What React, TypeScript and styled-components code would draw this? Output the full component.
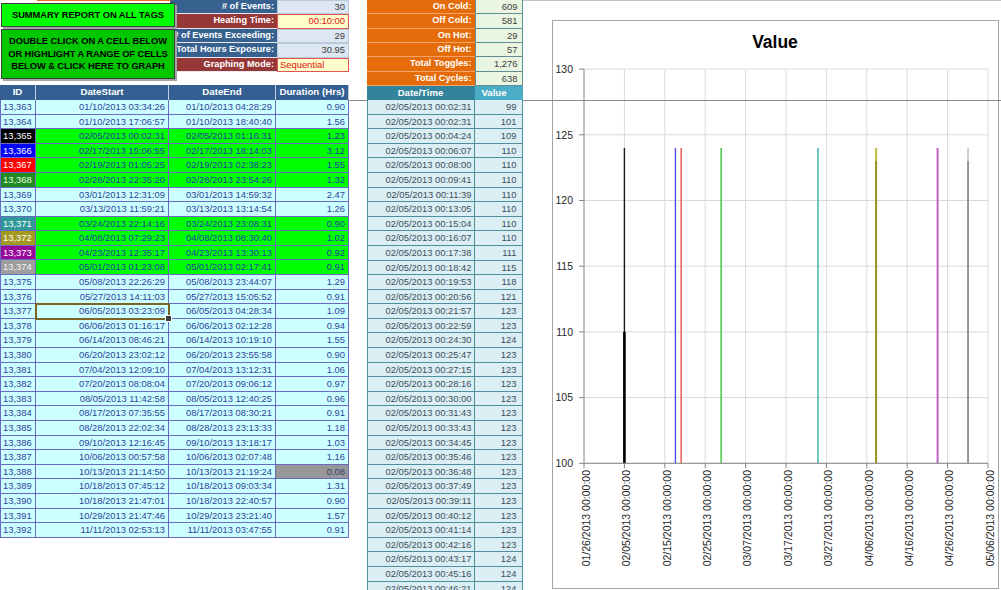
import React from 'react';
import styled, { createGlobalStyle } from 'styled-components';

const Global = createGlobalStyle`
  html, body { margin: 0; padding: 0; background: #ffffff; }
  body { font-family: "Liberation Sans", Arial, sans-serif; }
`;

const FONT = `"Liberation Sans", Arial, sans-serif`;

const Sheet = styled.div`
  position: relative;
  width: 1001px;
  height: 590px;
  overflow: hidden;
  background: #ffffff;
  display: flex;
  align-items: flex-start;
  font-family: ${FONT};
`;

const FreezeLine = styled.div`
  position: absolute;
  left: 0;
  right: 0;
  top: 99.5px;
  height: 1.5px;
  background: #8a8a8a;
  z-index: 1;
`;

/* ---------- left pane ---------- */

const LeftPane = styled.div`
  position: relative;
  z-index: 2;
  width: 349px;
  display: flex;
  flex-direction: column;
`;

const StatsGrid = styled.div`
  margin-left: 170px;
  display: grid;
  grid-template-columns: 107px 72px;
  grid-auto-rows: 14.4px;
`;

const StatLabel = styled.div<{ $tone: 'blue' | 'red' }>`
  box-sizing: border-box;
  background: ${(p) => (p.$tone === 'blue' ? '#37628f' : '#973838')};
  color: #ffffff;
  font: bold 9.2px/13.4px ${FONT};
  text-align: right;
  padding-right: 3px;
  white-space: nowrap;
  border-bottom: 1px solid #e8e8ee;
  display: flex;
  justify-content: flex-end;
`;

const StatValue = styled.div<{ $input?: boolean; $right?: boolean }>`
  box-sizing: border-box;
  background: ${(p) => (p.$input ? '#ffffcc' : '#dde7f1')};
  color: ${(p) => (p.$input ? '#e01010' : '#3a3a3a')};
  border: 1px solid ${(p) => (p.$input ? '#e05555' : '#b9c9dc')};
  font: 9.4px/12.4px ${FONT};
  text-align: ${(p) => (p.$input && !p.$right ? 'left' : 'right')};
  padding: 0 3px 0 2px;
  white-space: nowrap;
`;

const Spacer = styled.div<{ $h: number }>`
  height: ${(p) => p.$h}px;
`;

const EventTable = styled.div`
  display: grid;
  grid-template-columns: 36px 133px 107px 73px;
  grid-template-rows: 14.5px;
  grid-auto-rows: 14.6px;
`;

const EventHead = styled.div`
  box-sizing: border-box;
  background: #345f92;
  color: #ffffff;
  font: bold 9.7px/14.5px ${FONT};
  text-align: center;
  white-space: nowrap;
  border-right: 1px solid #c3cde0;
  &:last-of-type {
    border-right: 1px solid #345f92;
  }
`;

type Tone = 'plain' | 'hit' | 'gray';

const EventCell = styled.div<{
  $tone: Tone;
  $align: 'left' | 'right';
  $bg?: string;
  $fg?: string;
  $first?: boolean;
  $selected?: boolean;
}>`
  position: relative;
  box-sizing: border-box;
  border-right: 1px solid #6a6ac4;
  border-bottom: 1px solid #6a6ac4;
  border-left: ${(p) => (p.$first ? '1px solid #6a6ac4' : 'none')};
  background: ${(p) =>
    p.$bg ?? (p.$tone === 'hit' ? '#00ff00' : p.$tone === 'gray' ? '#979797' : '#ccffff')};
  color: ${(p) => p.$fg ?? (p.$tone === 'hit' ? '#1c3aa6' : p.$tone === 'gray' ? '#3a3f78' : '#30429a')};
  font: 9.4px/13.6px ${FONT};
  text-align: ${(p) => p.$align};
  padding: 0 ${(p) => (p.$align === 'right' ? '3px' : '2px')} 0 2px;
  white-space: nowrap;
  ${(p) =>
    p.$selected
      ? `
    z-index: 1;
    outline: 2px solid #7b6426;
    outline-offset: -1px;
    &::after {
      content: '';
      position: absolute;
      right: -4px;
      bottom: -4px;
      width: 5px;
      height: 5px;
      background: #3c3c3c;
      border: 1px solid #ffffff;
    }
  `
      : ''}
`;

/* ---------- buttons overlay ---------- */

const ButtonStack = styled.div`
  position: absolute;
  left: 1px;
  top: 0;
  z-index: 3;
  display: flex;
  flex-direction: column;
  gap: 2px;
`;

const TopStrip = styled.div`
  margin-left: 36px;
  width: 134px;
  height: 1px;
  background: #e07020;
`;

const ActionButton = styled.div<{ $tone: 'bright' | 'dark'; $h: number }>`
  box-sizing: border-box;
  width: 174px;
  height: ${(p) => p.$h}px;
  background: ${(p) => (p.$tone === 'bright' ? '#00ff00' : '#00c600')};
  border: 1px solid #404040;
  box-shadow: 2px 2px 0 #a3a3a3;
  color: #000000;
  font: bold 9.3px/12.6px ${FONT};
  letter-spacing: -0.05px;
  display: flex;
  align-items: center;
  justify-content: center;
  text-align: center;
  white-space: nowrap;
`;

/* ---------- middle pane ---------- */

const MiddlePane = styled.div`
  position: relative;
  z-index: 2;
  margin-left: 17.5px;
  width: 156px;
  display: flex;
  flex-direction: column;
`;

const ToggleGrid = styled.div`
  display: grid;
  grid-template-columns: 108px 48px;
  grid-auto-rows: 14.33px;
`;

const ToggleLabel = styled.div`
  box-sizing: border-box;
  background: #e46c0a;
  color: #ffffff;
  font: bold 9.2px/13.3px ${FONT};
  text-align: right;
  padding-right: 3px;
  white-space: nowrap;
  border-bottom: 1px solid #f3a46a;
`;

const ToggleValue = styled.div`
  box-sizing: border-box;
  background: #ebf6e2;
  color: #3c3c3c;
  border: 1px solid #5e8f94;
  border-top: none;
  font: 9.4px/13px ${FONT};
  text-align: right;
  padding-right: 4px;
`;

const ReadingTable = styled.div`
  display: grid;
  grid-template-columns: 108px 48px;
  grid-template-rows: 14px;
  grid-auto-rows: 14.6px;
`;

const ReadingHead = styled.div<{ $light?: boolean }>`
  background: ${(p) => (p.$light ? '#4bacc6' : '#31849b')};
  color: #ffffff;
  font: bold 9.6px/14px ${FONT};
  text-align: ${(p) => (p.$light ? 'left' : 'center')};
  padding-left: ${(p) => (p.$light ? '7px' : '0')};
  white-space: nowrap;
`;

const ReadingCell = styled.div<{ $first?: boolean }>`
  box-sizing: border-box;
  background: #daeef3;
  color: #3e4e5e;
  border-right: 1px solid #4e8e9e;
  border-bottom: 1px solid #4e8e9e;
  border-left: ${(p) => (p.$first ? '1px solid #4e8e9e' : 'none')};
  font: 9.4px/13.6px ${FONT};
  text-align: right;
  padding-right: ${(p) => (p.$first ? '2px' : '5px')};
  white-space: nowrap;
`;

/* ---------- chart ---------- */

const ChartPane = styled.div`
  flex: 1;
  align-self: stretch;
  border-top: 1px solid #c4c4c4;
  padding: 19px 0 0 29px;
`;

const ChartBox = styled.div`
  box-sizing: border-box;
  width: 447px;
  height: 569px;
  border: 1px solid #a6a6a6;
  background: #ffffff;
  display: flex;
  flex-direction: column;
`;

const ChartTitle = styled.div`
  height: 40px;
  font: bold 17.5px/42px ${FONT};
  color: #000000;
  text-align: center;
`;

/* ---------- data ---------- */

const stats: { label: string; tone: 'blue' | 'red'; value: string; input?: boolean; right?: boolean }[] = [
  { label: '# of Events:', tone: 'blue', value: '30' },
  { label: 'Heating Time:', tone: 'red', value: '00:10:00', input: true, right: true },
  { label: '# of Events Exceeding:', tone: 'blue', value: '29' },
  { label: 'Total Hours Exposure:', tone: 'blue', value: '30.95' },
  { label: 'Graphing Mode:', tone: 'red', value: 'Sequential', input: true },
];

const toggles: [string, string][] = [
  ['On Cold:', '609'],
  ['Off Cold:', '581'],
  ['On Hot:', '29'],
  ['Off Hot:', '57'],
  ['Total Toggles:', '1,276'],
  ['Total Cycles:', '638'],
];

type Ev = {
  id: string;
  s: string;
  e: string;
  d: string;
  idBg?: string;
  idFg?: string;
  hit?: boolean;
  gray?: boolean;
  sel?: boolean;
};

const events: Ev[] = [
  { id: '13,363', s: '01/10/2013 03:34:26', e: '01/10/2013 04:28:29', d: '0.90' },
  { id: '13,364', s: '01/10/2013 17:06:57', e: '01/10/2013 18:40:40', d: '1.56' },
  { id: '13,365', s: '02/05/2013 00:02:31', e: '02/05/2013 01:16:31', d: '1.23', idBg: '#000000', idFg: '#ffffff', hit: true },
  { id: '13,366', s: '02/17/2013 15:06:55', e: '02/17/2013 18:14:03', d: '3.12', idBg: '#0000ff', idFg: '#ffffff', hit: true },
  { id: '13,367', s: '02/19/2013 01:05:25', e: '02/19/2013 02:38:23', d: '1.55', idBg: '#ff0000', idFg: '#ffffff', hit: true },
  { id: '13,368', s: '02/28/2013 22:35:20', e: '02/28/2013 23:54:26', d: '1.32', idBg: '#1f8a1f', idFg: '#e8ffe0', hit: true },
  { id: '13,369', s: '03/01/2013 12:31:09', e: '03/01/2013 14:59:32', d: '2.47' },
  { id: '13,370', s: '03/13/2013 11:59:21', e: '03/13/2013 13:14:54', d: '1.26' },
  { id: '13,371', s: '03/24/2013 22:14:16', e: '03/24/2013 23:08:31', d: '0.90', idBg: '#2f9898', idFg: '#ffffff', hit: true },
  { id: '13,372', s: '04/08/2013 07:29:23', e: '04/08/2013 08:30:40', d: '1.02', idBg: '#a39820', idFg: '#ffffff', hit: true },
  { id: '13,373', s: '04/23/2013 12:35:17', e: '04/23/2013 13:30:13', d: '0.92', idBg: '#980898', idFg: '#ffffff', hit: true },
  { id: '13,374', s: '05/01/2013 01:23:08', e: '05/01/2013 02:17:41', d: '0.91', idBg: '#9e9e9e', idFg: '#f4f4f4', hit: true },
  { id: '13,375', s: '05/08/2013 22:26:29', e: '05/08/2013 23:44:07', d: '1.29' },
  { id: '13,376', s: '05/27/2013 14:11:03', e: '05/27/2013 15:05:52', d: '0.91' },
  { id: '13,377', s: '06/05/2013 03:23:09', e: '06/05/2013 04:28:34', d: '1.09', sel: true },
  { id: '13,378', s: '06/06/2013 01:16:17', e: '06/06/2013 02:12:28', d: '0.94' },
  { id: '13,379', s: '06/14/2013 08:46:21', e: '06/14/2013 10:19:10', d: '1.55' },
  { id: '13,380', s: '06/20/2013 23:02:12', e: '06/20/2013 23:55:58', d: '0.90' },
  { id: '13,381', s: '07/04/2013 12:09:10', e: '07/04/2013 13:12:31', d: '1.06' },
  { id: '13,382', s: '07/20/2013 08:08:04', e: '07/20/2013 09:06:12', d: '0.97' },
  { id: '13,383', s: '08/05/2013 11:42:58', e: '08/05/2013 12:40:25', d: '0.96' },
  { id: '13,384', s: '08/17/2013 07:35:55', e: '08/17/2013 08:30:21', d: '0.91' },
  { id: '13,385', s: '08/28/2013 22:02:34', e: '08/28/2013 23:13:33', d: '1.18' },
  { id: '13,386', s: '09/10/2013 12:16:45', e: '09/10/2013 13:18:17', d: '1.03' },
  { id: '13,387', s: '10/06/2013 00:57:58', e: '10/06/2013 02:07:48', d: '1.16' },
  { id: '13,388', s: '10/13/2013 21:14:50', e: '10/13/2013 21:19:24', d: '0.08', gray: true },
  { id: '13,389', s: '10/18/2013 07:45:12', e: '10/18/2013 09:03:34', d: '1.31' },
  { id: '13,390', s: '10/18/2013 21:47:01', e: '10/18/2013 22:40:57', d: '0.90' },
  { id: '13,391', s: '10/29/2013 21:47:46', e: '10/29/2013 23:21:40', d: '1.57' },
  { id: '13,392', s: '11/11/2013 02:53:13', e: '11/11/2013 03:47:55', d: '0.91' },
];

const readings: [string, string][] = [
  ['00:02:31', '99'],
  ['00:02:31', '101'],
  ['00:04:24', '109'],
  ['00:06:07', '110'],
  ['00:08:00', '110'],
  ['00:09:41', '110'],
  ['00:11:39', '110'],
  ['00:13:05', '110'],
  ['00:15:04', '110'],
  ['00:16:07', '110'],
  ['00:17:38', '111'],
  ['00:18:42', '115'],
  ['00:19:53', '118'],
  ['00:20:56', '121'],
  ['00:21:57', '123'],
  ['00:22:59', '123'],
  ['00:24:30', '124'],
  ['00:25:47', '123'],
  ['00:27:15', '123'],
  ['00:28:16', '123'],
  ['00:30:00', '123'],
  ['00:31:43', '123'],
  ['00:33:43', '123'],
  ['00:34:45', '123'],
  ['00:35:46', '123'],
  ['00:36:48', '123'],
  ['00:37:49', '123'],
  ['00:39:11', '123'],
  ['00:40:12', '123'],
  ['00:41:14', '123'],
  ['00:42:16', '123'],
  ['00:43:17', '124'],
  ['00:45:16', '124'],
  ['00:46:21', '124'],
];

/* ---------- chart geometry (page coordinates via viewBox) ---------- */

const X0 = 583;
const DAY = 4.04;
const Y100 = 463.3;
const PER = 13.14;
const yOf = (v: number) => Y100 - (v - 100) * PER;
const BASE = Date.UTC(2013, 0, 26);
const xOf = (t: number[]) =>
  X0 + ((Date.UTC(t[0], t[1], t[2], t[3], t[4], t[5]) - BASE) / 86400000) * DAY;

const tickLabels = [
  '01/26/2013', '02/05/2013', '02/15/2013', '02/25/2013', '03/07/2013', '03/17/2013',
  '03/27/2013', '04/06/2013', '04/16/2013', '04/26/2013', '05/06/2013',
];

type Series = { c: string; t: number[]; w: number; extra?: { c: string; w: number; to: number } };

const series: Series[] = [
  { c: '#1a1a1a', t: [2013, 1, 5, 0, 2, 31], w: 1.4, extra: { c: '#000000', w: 2.6, to: 110 } },
  { c: '#5050f0', t: [2013, 1, 17, 15, 6, 55], w: 1.4 },
  { c: '#f05050', t: [2013, 1, 19, 1, 5, 25], w: 1.4 },
  { c: '#3ac43a', t: [2013, 1, 28, 22, 35, 20], w: 1.4 },
  { c: '#3fb4b4', t: [2013, 2, 24, 22, 14, 16], w: 1.5 },
  { c: '#bcbc3c', t: [2013, 3, 8, 7, 29, 23], w: 2, extra: { c: '#8e8e1e', w: 1.6, to: 123 } },
  { c: '#c064c8', t: [2013, 3, 23, 12, 35, 17], w: 2 },
  { c: '#c4c4c4', t: [2013, 4, 1, 1, 23, 8], w: 1.6, extra: { c: '#7e7e7e', w: 1.4, to: 123 } },
];

const Chart: React.FC = () => {
  const xEnd = X0 + 100 * DAY;
  const yTop = yOf(130);
  const gridVals = [100, 105, 110, 115, 120, 125, 130];
  return (
    <svg width={445} height={527} viewBox="552 61 445 527" style={{ display: 'block' }}>
      {gridVals.map((v) => (
        <line key={`h${v}`} x1={X0} x2={xEnd} y1={yOf(v)} y2={yOf(v)} stroke="#d9d9d9" strokeWidth={1} />
      ))}
      {tickLabels.map((_, i) =>
        i === 0 ? null : (
          <line key={`v${i}`} x1={X0 + i * 40.4} x2={X0 + i * 40.4} y1={yTop} y2={Y100} stroke="#d9d9d9" strokeWidth={1} />
        ),
      )}
      {gridVals.map((v) => (
        <line key={`yt${v}`} x1={X0 - 5} x2={X0} y1={yOf(v)} y2={yOf(v)} stroke="#868686" strokeWidth={1} />
      ))}
      {tickLabels.map((_, i) => (
        <line key={`xt${i}`} x1={X0 + i * 40.4} x2={X0 + i * 40.4} y1={Y100} y2={Y100 + 5} stroke="#868686" strokeWidth={1} />
      ))}
      {series.map((s, i) => {
        const x = xOf(s.t);
        return (
          <g key={`s${i}`}>
            <line x1={x} x2={x} y1={yOf(124)} y2={Y100} stroke={s.c} strokeWidth={s.w} />
            {s.extra && (
              <line x1={x} x2={x} y1={yOf(s.extra.to)} y2={Y100} stroke={s.extra.c} strokeWidth={s.extra.w} />
            )}
          </g>
        );
      })}
      <line x1={X0} x2={X0} y1={yTop} y2={Y100} stroke="#868686" strokeWidth={1} />
      <line x1={X0} x2={xEnd} y1={Y100} y2={Y100} stroke="#868686" strokeWidth={1} />
      {gridVals.map((v) => (
        <text
          key={`yl${v}`}
          x={572}
          y={yOf(v) + 3.8}
          textAnchor="end"
          fontFamily={FONT}
          fontSize={10.5}
          fill="#262626"
        >
          {v}
        </text>
      ))}
      {tickLabels.map((d, i) => {
        const bx = X0 + i * 40.4 + 5.7;
        return (
          <text
            key={`xl${i}`}
            x={bx}
            y={470}
            transform={`rotate(-90 ${bx} 470)`}
            textAnchor="end"
            fontFamily={FONT}
            fontSize={10.5}
            fill="#262626"
          >
            {`${d} 00:00:00`}
          </text>
        );
      })}
    </svg>
  );
};

export default function App() {
  return (
    <>
      <Global />
      <Sheet>
        <FreezeLine />
        <ButtonStack>
          <TopStrip />
          <ActionButton $tone="bright" $h={24}>
            SUMMARY REPORT ON ALL TAGS
          </ActionButton>
          <ActionButton $tone="dark" $h={50}>
            DOUBLE CLICK ON A CELL BELOW
            <br />
            OR HIGHLIGHT A RANGE OF CELLS
            <br />
            BELOW &amp; CLICK HERE TO GRAPH
          </ActionButton>
        </ButtonStack>

        <LeftPane>
          <StatsGrid>
            {stats.map((s) => (
              <React.Fragment key={s.label}>
                <StatLabel $tone={s.tone}>{s.label}</StatLabel>
                <StatValue $input={s.input} $right={s.right}>
                  {s.value}
                </StatValue>
              </React.Fragment>
            ))}
          </StatsGrid>
          <Spacer $h={13.5} />
          <EventTable>
            <EventHead>ID</EventHead>
            <EventHead>DateStart</EventHead>
            <EventHead>DateEnd</EventHead>
            <EventHead>Duration (Hrs)</EventHead>
            {events.map((ev) => {
              const tone: Tone = ev.hit ? 'hit' : 'plain';
              return (
                <React.Fragment key={ev.id}>
                  <EventCell $tone="plain" $align="left" $bg={ev.idBg} $fg={ev.idFg} $first>
                    {ev.id}
                  </EventCell>
                  <EventCell $tone={tone} $align="right" $selected={ev.sel}>
                    {ev.s}
                  </EventCell>
                  <EventCell $tone={tone} $align="right">
                    {ev.e}
                  </EventCell>
                  <EventCell $tone={ev.gray ? 'gray' : tone} $align="right">
                    {ev.d}
                  </EventCell>
                </React.Fragment>
              );
            })}
          </EventTable>
        </LeftPane>

        <MiddlePane>
          <ToggleGrid>
            {toggles.map(([l, v]) => (
              <React.Fragment key={l}>
                <ToggleLabel>{l}</ToggleLabel>
                <ToggleValue>{v}</ToggleValue>
              </React.Fragment>
            ))}
          </ToggleGrid>
          <ReadingTable>
            <ReadingHead>Date/Time</ReadingHead>
            <ReadingHead $light>Value</ReadingHead>
            {readings.map(([t, v], i) => (
              <React.Fragment key={i}>
                <ReadingCell $first>{`02/05/2013 ${t}`}</ReadingCell>
                <ReadingCell>{v}</ReadingCell>
              </React.Fragment>
            ))}
          </ReadingTable>
        </MiddlePane>

        <ChartPane>
          <ChartBox>
            <ChartTitle>Value</ChartTitle>
            <Chart />
          </ChartBox>
        </ChartPane>
      </Sheet>
    </>
  );
}
